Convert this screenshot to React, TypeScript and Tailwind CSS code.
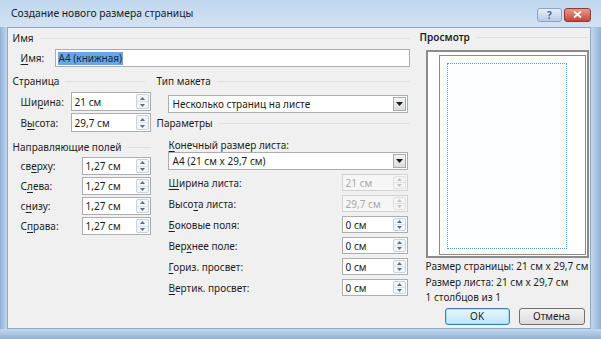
import React from "react";

const ui = "font-['Segoe_UI','Noto_Sans',sans-serif]";

type Acc = { pre?: string; u: string; post: string };

const AccLabel = ({ pre = "", u, post }: Acc) => (
  <span>
    {pre}
    <span className="underline underline-offset-2">{u}</span>
    {post}
  </span>
);

const GroupHeader = ({ title, bold }: { title: string; bold?: boolean }) => (
  <div className="flex h-[14px] items-center gap-[6px]">
    <span className={`leading-none text-[#1e1e1e] ${bold ? "font-semibold" : ""}`}>{title}</span>
    <div className="h-px flex-1 bg-[#dcdfe3]" />
  </div>
);

const Arrow = ({ up, color }: { up?: boolean; color: string }) => (
  <svg width="5" height="3" viewBox="0 0 5 3">
    <path d={up ? "M0 3 L2.5 0 L5 3Z" : "M0 0 L2.5 3 L5 0Z"} fill={color} />
  </svg>
);

const Spinner = ({ disabled }: { disabled?: boolean }) => (
  <div
    className={`my-[1px] mr-[1px] flex w-[13px] flex-col rounded-[2px] border ${
      disabled ? "border-[#e0e0e0] bg-[#f4f4f4]" : "border-[#c9d2dc] bg-[#f3f6f9]"
    }`}
  >
    <div className="flex flex-1 items-center justify-center border-b border-[#dde3ea]">
      <Arrow up color={disabled ? "#c4c4c4" : "#5d6d80"} />
    </div>
    <div className="flex flex-1 items-center justify-center">
      <Arrow color={disabled ? "#c4c4c4" : "#5d6d80"} />
    </div>
  </div>
);

const NumField = ({ value, w, h = 18, disabled }: { value: string; w: string; h?: number; disabled?: boolean }) => (
  <div
    className={`flex ${w} border ${
      disabled ? "border-[#d2d2d2] bg-[#f6f6f6] text-[#a8a8a8]" : "border-[#abadb3] bg-white text-[#1a1a1a]"
    }`}
    style={{ height: h }}
  >
    <div className="flex flex-1 items-center pl-[3px] leading-none">{value}</div>
    <Spinner disabled={disabled} />
  </div>
);

const Combo = ({ value }: { value: string }) => (
  <div className="ml-[11px] flex h-[18px] w-[240px] border border-[#abadb3] bg-white">
    <div className="flex flex-1 items-center pl-[4px] leading-none text-[#1a1a1a]">{value}</div>
    <div className="m-[1px] flex w-[13px] items-center justify-center border border-[#a8acb2] bg-gradient-to-b from-[#f4f4f4] to-[#dcdcdc]">
      <svg width="7" height="4" viewBox="0 0 7 4">
        <path d="M0 0 L3.5 4 L7 0Z" fill="#1a1a1a" />
      </svg>
    </div>
  </div>
);

const pageRows: { label: Acc; value: string }[] = [
  { label: { pre: "Ши", u: "р", post: "ина:" }, value: "21 см" },
  { label: { pre: "В", u: "ы", post: "сота:" }, value: "29,7 см" },
];

const marginRows: { label: Acc; value: string }[] = [
  { label: { pre: "св", u: "е", post: "рху:" }, value: "1,27 см" },
  { label: { pre: "С", u: "л", post: "ева:" }, value: "1,27 см" },
  { label: { pre: "с", u: "н", post: "изу:" }, value: "1,27 см" },
  { label: { pre: "С", u: "п", post: "рава:" }, value: "1,27 см" },
];

const paramRows: { label: Acc; value: string; disabled?: boolean }[] = [
  { label: { u: "Ш", post: "ирина листа:" }, value: "21 см", disabled: true },
  { label: { pre: "Высо", u: "т", post: "а листа:" }, value: "29,7 см", disabled: true },
  { label: { u: "Б", post: "оковые поля:" }, value: "0 см" },
  { label: { pre: "Вер", u: "х", post: "нее поле:" }, value: "0 см" },
  { label: { u: "Г", post: "ориз. просвет:" }, value: "0 см" },
  { label: { u: "В", post: "ертик. просвет:" }, value: "0 см" },
];

export default function App() {
  return (
    <div className={`${ui} flex h-[339px] w-[601px] flex-col overflow-hidden bg-[#a9c6e4]`}>
      {/* title bar */}
      <div className="flex h-[27px] shrink-0 items-center bg-gradient-to-b from-[#bfd6ee] to-[#d3e3f4] pl-[11px] pr-[10px]">
        <span className="flex-1 text-[10.3px] text-[#1b1b1b]">Создание нового размера страницы</span>
        <div className="mt-[2px] flex gap-[2px]">
          <div className="flex h-[14px] w-[25px] items-center justify-center rounded-[3px] border border-[#8aa5c3] bg-gradient-to-b from-[#e4eef8] to-[#b9cde3] text-[10px] font-bold leading-none text-[#4a6a8c]">
            ?
          </div>
          <div className="flex h-[14px] w-[27px] items-center justify-center rounded-[3px] border border-[#8d3a33] bg-gradient-to-b from-[#e59a8c] to-[#c2463a]">
            <svg width="9" height="7" viewBox="0 0 9 7">
              <path d="M1 0.5 L8 6.5 M8 0.5 L1 6.5" stroke="white" strokeWidth="1.8" />
            </svg>
          </div>
        </div>
      </div>

      <div className="flex h-[302px] shrink-0">
        <div className="w-[7px] bg-gradient-to-r from-[#8fb2d8] to-[#c3d8ee]" />
        {/* content */}
        <div className="flex flex-1 border border-[#8ea9c6] bg-[#f0f0f0] text-[10px] text-[#1e1e1e]">
          {/* main column */}
          <div className="flex w-[405px] flex-col pl-[5px] pt-[3px]">
            <div className="pr-[3px]">
              <GroupHeader title="Имя" />
            </div>
            <div className="mt-[4px] flex h-[18px] items-center">
              <span className="w-[42px] pl-[8px] leading-none">
                <AccLabel u="И" post="мя:" />
              </span>
              <div className="flex h-[18px] w-[355px] items-center border border-[#abadb3] bg-white pl-[2px]">
                <span className="bg-[#6aa6e4] px-[1px] leading-[13px] text-[#10294d]">A4 (книжная)</span>
              </div>
            </div>

            <div className="mt-[7px] flex gap-[6px]">
              {/* left sub column */}
              <div className="flex w-[138px] flex-col">
                <div className="pr-[6px]">
                  <GroupHeader title="Страница" />
                </div>
                <div className="mt-[4px] flex flex-col gap-[2px]">
                  {pageRows.map((r) => (
                    <div key={r.value} className="flex h-[19px] items-center">
                      <span className="w-[58px] pl-[8px] leading-none">
                        <AccLabel {...r.label} />
                      </span>
                      <NumField value={r.value} w="w-[80px]" h={19} />
                    </div>
                  ))}
                </div>
                <div className="mt-[8px]">
                  <GroupHeader title="Направляющие полей" />
                </div>
                <div className="mt-[3px] flex flex-col gap-[2px]">
                  {marginRows.map((r, i) => (
                    <div key={i} className="flex h-[18px] items-center">
                      <span className="w-[69px] pl-[8px] leading-none">
                        <AccLabel {...r.label} />
                      </span>
                      <NumField value={r.value} w="w-[69px]" />
                    </div>
                  ))}
                </div>
              </div>

              {/* middle sub column */}
              <div className="flex w-[253px] flex-col">
                <GroupHeader title="Тип макета" />
                <div className="mt-[7px]">
                  <Combo value="Несколько страниц на листе" />
                </div>
                <div className="mt-[3px]">
                  <GroupHeader title="Параметры" />
                </div>
                <div className="mt-[8px] flex h-[14px] items-center pl-[12px] leading-none">
                  <AccLabel u="К" post="онечный размер листа:" />
                </div>
                <Combo value="A4 (21 см x 29,7 см)" />
                <div className="mt-[4px] flex flex-col gap-[4px]">
                  {paramRows.map((r, i) => (
                    <div key={i} className="flex h-[17px] items-center">
                      <span className="w-[185px] pl-[12px] leading-none">
                        <AccLabel {...r.label} />
                      </span>
                      <NumField value={r.value} w="w-[66px]" h={17} disabled={r.disabled} />
                    </div>
                  ))}
                </div>
              </div>
            </div>
          </div>

          {/* preview column */}
          <div className="flex flex-1 flex-col pl-[7px] pr-[1px] pt-[2px]">
            <GroupHeader title="Просмотр" bold />
            <div className="ml-[6px] mt-[6px] flex h-[208px] w-[163px] border-2 border-[#8c8c8c] bg-white pb-[1px] pl-[11px] pr-[1px] pt-[3px]">
              <div className="flex flex-1 border border-[#8a8a8a] bg-white pb-[5px] pl-[7px] pr-[18px] pt-[7px]">
                <div className="flex-1 border border-dotted border-[#4b9bd4] bg-[#fcfeff]" />
              </div>
            </div>
            <div className="ml-[6px] mt-[1px] flex flex-col leading-[15.5px]">
              <span>Размер страницы: 21 см x 29,7 см</span>
              <span>Размер листа: 21 см x 29,7 см</span>
              <span>1 столбцов из 1</span>
            </div>
            <div className="mt-[2px] flex justify-end gap-[9px] pr-[4px]">
              <div className="flex h-[17px] w-[65px] items-center justify-center rounded-[3px] border border-[#3c7fb1] bg-gradient-to-b from-[#eaf6fd] to-[#bee6fd] shadow-[inset_0_0_0_1px_#a6daf7]">
                OK
              </div>
              <div className="flex h-[17px] w-[66px] items-center justify-center rounded-[3px] border border-[#707070] bg-gradient-to-b from-[#f2f2f2] to-[#dcdcdc]">
                Отмена
              </div>
            </div>
          </div>
        </div>
        <div className="w-[11px] bg-gradient-to-r from-[#c3d8ee] to-[#8fb2d8]" />
      </div>
      <div className="h-[10px] shrink-0 bg-gradient-to-b from-[#c3d8ee] to-[#8fb2d8]" />
    </div>
  );
}
